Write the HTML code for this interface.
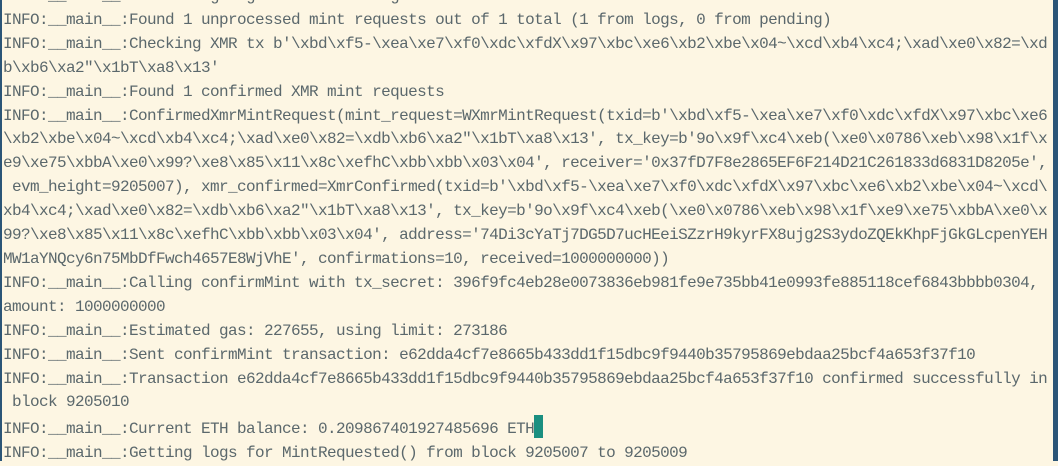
<!DOCTYPE html>
<html><head><meta charset="utf-8"><style>
html,body{margin:0;padding:0;}
body{width:1058px;height:461px;overflow:hidden;background:#fdf6e3;position:relative;}
.l{position:absolute;left:0;top:0;width:2px;height:461px;background:#2b5577;}
.r{position:absolute;right:0;top:0;width:5px;height:461px;background:#2b5577;}
pre{position:absolute;left:3px;top:-15px;margin:0;font-family:"Liberation Mono",monospace;font-size:16px;letter-spacing:-0.6px;line-height:23.9px;color:#5b686c;}
.c{display:inline-block;width:9px;height:23px;background:#1a8f80;vertical-align:-5px;}
</style></head><body>
<div class="l"></div><div class="r"></div>
<pre>INFO:__main__:Processing log from block height 9205007
INFO:__main__:Found 1 unprocessed mint requests out of 1 total (1 from logs, 0 from pending)
INFO:__main__:Checking XMR tx b'\xbd\xf5-\xea\xe7\xf0\xdc\xfdX\x97\xbc\xe6\xb2\xbe\x04~\xcd\xb4\xc4;\xad\xe0\x82=\xd
b\xb6\xa2"\x1bT\xa8\x13'
INFO:__main__:Found 1 confirmed XMR mint requests
INFO:__main__:ConfirmedXmrMintRequest(mint_request=WXmrMintRequest(txid=b'\xbd\xf5-\xea\xe7\xf0\xdc\xfdX\x97\xbc\xe6
\xb2\xbe\x04~\xcd\xb4\xc4;\xad\xe0\x82=\xdb\xb6\xa2"\x1bT\xa8\x13', tx_key=b'9o\x9f\xc4\xeb(\xe0\x0786\xeb\x98\x1f\x
e9\xe75\xbbA\xe0\x99?\xe8\x85\x11\x8c\xefhC\xbb\xbb\x03\x04', receiver='0x37fD7F8e2865EF6F214D21C261833d6831D8205e',
 evm_height=9205007), xmr_confirmed=XmrConfirmed(txid=b'\xbd\xf5-\xea\xe7\xf0\xdc\xfdX\x97\xbc\xe6\xb2\xbe\x04~\xcd\
xb4\xc4;\xad\xe0\x82=\xdb\xb6\xa2"\x1bT\xa8\x13', tx_key=b'9o\x9f\xc4\xeb(\xe0\x0786\xeb\x98\x1f\xe9\xe75\xbbA\xe0\x
99?\xe8\x85\x11\x8c\xefhC\xbb\xbb\x03\x04', address='74Di3cYaTj7DG5D7ucHEeiSZzrH9kyrFX8ujg2S3ydoZQEkKhpFjGkGLcpenYEH
MW1aYNQcy6n75MbDfFwch4657E8WjVhE', confirmations=10, received=1000000000))
INFO:__main__:Calling confirmMint with tx_secret: 396f9fc4eb28e0073836eb981fe9e735bb41e0993fe885118cef6843bbbb0304,
amount: 1000000000
INFO:__main__:Estimated gas: 227655, using limit: 273186
INFO:__main__:Sent confirmMint transaction: e62dda4cf7e8665b433dd1f15dbc9f9440b35795869ebdaa25bcf4a653f37f10
INFO:__main__:Transaction e62dda4cf7e8665b433dd1f15dbc9f9440b35795869ebdaa25bcf4a653f37f10 confirmed successfully in
 block 9205010
INFO:__main__:Current ETH balance: 0.209867401927485696 ETH<span class="c"></span>
INFO:__main__:Getting logs for MintRequested() from block 9205007 to 9205009</pre>
</body></html>
